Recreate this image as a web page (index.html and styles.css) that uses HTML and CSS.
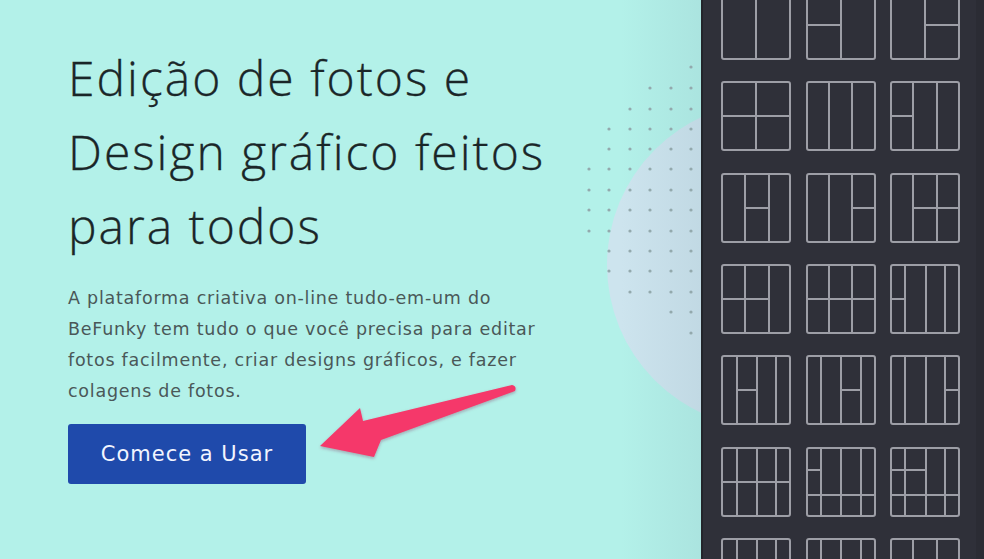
FILE: index.html
```html
<!DOCTYPE html>
<html lang="pt">
<head>
<meta charset="utf-8">
<title>BeFunky</title>
<link rel="stylesheet" href="styles.css">
</head>
<body>
<div class="page">
  <section class="hero">
    <div class="blob"></div>
    <div class="shade"></div>
    <svg class="dots" width="130" height="290" viewBox="0 0 130 290">
      <g fill="#93a9ad">
        <circle cx="111" cy="12" r="1.6"/>
        <circle cx="70" cy="33" r="1.6"/><circle cx="91" cy="33" r="1.6"/><circle cx="111" cy="33" r="1.6"/>
        <circle cx="50" cy="54" r="1.6"/><circle cx="70" cy="54" r="1.6"/><circle cx="91" cy="54" r="1.6"/><circle cx="111" cy="54" r="1.6"/>
        <circle cx="29" cy="74" r="1.6"/><circle cx="50" cy="74" r="1.6"/><circle cx="70" cy="74" r="1.6"/><circle cx="91" cy="74" r="1.6"/><circle cx="111" cy="74" r="1.6"/>
        <circle cx="29" cy="94" r="1.6"/><circle cx="50" cy="94" r="1.6"/><circle cx="70" cy="94" r="1.6"/><circle cx="91" cy="94" r="1.6"/><circle cx="111" cy="94" r="1.6"/>
        <circle cx="9" cy="114" r="1.6"/><circle cx="29" cy="114" r="1.6"/><circle cx="50" cy="114" r="1.6"/><circle cx="70" cy="114" r="1.6"/><circle cx="91" cy="114" r="1.6"/><circle cx="111" cy="114" r="1.6"/>
        <circle cx="9" cy="135" r="1.6"/><circle cx="29" cy="135" r="1.6"/><circle cx="50" cy="135" r="1.6"/><circle cx="70" cy="135" r="1.6"/><circle cx="91" cy="135" r="1.6"/><circle cx="111" cy="135" r="1.6"/>
        <circle cx="9" cy="155" r="1.6"/><circle cx="29" cy="155" r="1.6"/><circle cx="50" cy="155" r="1.6"/><circle cx="70" cy="155" r="1.6"/><circle cx="91" cy="155" r="1.6"/><circle cx="111" cy="155" r="1.6"/>
        <circle cx="9" cy="176" r="1.6"/><circle cx="29" cy="176" r="1.6"/><circle cx="50" cy="176" r="1.6"/><circle cx="70" cy="176" r="1.6"/><circle cx="91" cy="176" r="1.6"/><circle cx="111" cy="176" r="1.6"/>
        <circle cx="29" cy="196" r="1.6"/><circle cx="50" cy="196" r="1.6"/><circle cx="70" cy="196" r="1.6"/><circle cx="91" cy="196" r="1.6"/><circle cx="111" cy="196" r="1.6"/>
        <circle cx="29" cy="216" r="1.6"/><circle cx="50" cy="216" r="1.6"/><circle cx="70" cy="216" r="1.6"/><circle cx="91" cy="216" r="1.6"/><circle cx="111" cy="216" r="1.6"/>
        <circle cx="50" cy="237" r="1.6"/><circle cx="70" cy="237" r="1.6"/><circle cx="91" cy="237" r="1.6"/><circle cx="111" cy="237" r="1.6"/>
        <circle cx="91" cy="257" r="1.6"/><circle cx="111" cy="257" r="1.6"/>
        <circle cx="111" cy="278" r="1.6"/>
      </g>
    </svg>
    <div class="copy">
      <h1 class="title">Edição de fotos e<br>Design gráfico feitos<br>para todos</h1>
      <p class="lead">A plataforma criativa on-line tudo-em-um do<br>BeFunky tem tudo o que você precisa para editar<br>fotos facilmente, criar designs gráficos, e fazer<br>colagens de fotos.</p>
      <a class="cta" href="#">Comece a Usar</a>
    </div>
  </section>

  <aside class="panel">
    <div class="tiles">
      <svg class="tile" viewBox="0 0 70 70"><rect x="1" y="1" width="68" height="68" rx="2"/><path d="M35 1V69"/></svg>
      <svg class="tile" viewBox="0 0 70 70"><rect x="1" y="1" width="68" height="68" rx="2"/><path d="M35 1V69M1 35H35"/></svg>
      <svg class="tile" viewBox="0 0 70 70"><rect x="1" y="1" width="68" height="68" rx="2"/><path d="M35 1V69M35 35H69"/></svg>

      <svg class="tile" viewBox="0 0 70 70"><rect x="1" y="1" width="68" height="68" rx="2"/><path d="M35 1V69M1 35H69"/></svg>
      <svg class="tile" viewBox="0 0 70 70"><rect x="1" y="1" width="68" height="68" rx="2"/><path d="M23 1V69M46 1V69"/></svg>
      <svg class="tile" viewBox="0 0 70 70"><rect x="1" y="1" width="68" height="68" rx="2"/><path d="M23 1V69M47 1V69M1 35H23"/></svg>

      <svg class="tile" viewBox="0 0 70 70"><rect x="1" y="1" width="68" height="68" rx="2"/><path d="M24 1V69M48 1V69M24 35H48"/></svg>
      <svg class="tile" viewBox="0 0 70 70"><rect x="1" y="1" width="68" height="68" rx="2"/><path d="M23 1V69M46 1V69M46 35H69"/></svg>
      <svg class="tile" viewBox="0 0 70 70"><rect x="1" y="1" width="68" height="68" rx="2"/><path d="M23 1V69M47 1V69M23 35H69"/></svg>

      <svg class="tile" viewBox="0 0 70 70"><rect x="1" y="1" width="68" height="68" rx="2"/><path d="M24 1V69M48 1V69M1 35H48"/></svg>
      <svg class="tile" viewBox="0 0 70 70"><rect x="1" y="1" width="68" height="68" rx="2"/><path d="M23 1V69M46 1V69M1 35H69"/></svg>
      <svg class="tile" viewBox="0 0 70 70"><rect x="1" y="1" width="68" height="68" rx="2"/><path d="M15 1V69M36 1V69M55 1V69M1 35H15"/></svg>

      <svg class="tile" viewBox="0 0 70 70"><rect x="1" y="1" width="68" height="68" rx="2"/><path d="M16 1V69M36 1V69M55 1V69M16 35H36"/></svg>
      <svg class="tile" viewBox="0 0 70 70"><rect x="1" y="1" width="68" height="68" rx="2"/><path d="M15 1V69M35 1V69M55 1V69M35 35H55"/></svg>
      <svg class="tile" viewBox="0 0 70 70"><rect x="1" y="1" width="68" height="68" rx="2"/><path d="M15 1V69M36 1V69M55 1V69M55 35H69"/></svg>

      <svg class="tile" viewBox="0 0 70 70"><rect x="1" y="1" width="68" height="68" rx="2"/><path d="M16 1V69M36 1V69M55 1V69M1 35H69"/></svg>
      <svg class="tile" viewBox="0 0 70 70"><rect x="1" y="1" width="68" height="68" rx="2"/><path d="M15 1V69M35 1V69M55 1V69M1 23H15M1 48H69"/></svg>
      <svg class="tile" viewBox="0 0 70 70"><rect x="1" y="1" width="68" height="68" rx="2"/><path d="M15 1V69M36 1V69M55 1V69M1 23H36M1 48H69"/></svg>

      <svg class="tile" viewBox="0 0 70 70"><rect x="1" y="1" width="68" height="68" rx="2"/><path d="M16 1V69M36 1V69M55 1V69"/></svg>
      <svg class="tile" viewBox="0 0 70 70"><rect x="1" y="1" width="68" height="68" rx="2"/><path d="M15 1V69M35 1V69M55 1V69"/></svg>
      <svg class="tile" viewBox="0 0 70 70"><rect x="1" y="1" width="68" height="68" rx="2"/><path d="M23 1V69M47 1V69"/></svg>
    </div>
  </aside>

  <svg class="arrow" width="984" height="559" viewBox="0 0 984 559">
    <defs>
      <filter id="sh" x="-10%" y="-30%" width="120%" height="160%">
        <feDropShadow dx="0" dy="1.5" stdDeviation="1.5" flood-color="#7a2040" flood-opacity="0.35"/>
      </filter>
    </defs>
    <path d="M320 446 L360 408 L363 421 L512 385 Q517 386 515 391 L381 440 L374 457 Z" fill="#f5386b" filter="url(#sh)"/>
  </svg>
</div>
</body>
</html>
```

FILE: styles.css
```css
* { box-sizing: border-box; }
html, body { margin: 0; padding: 0; }
body {
  width: 984px;
  height: 559px;
  overflow: hidden;
  background: #b3f1e9;
}
.page {
  position: relative;
  display: flex;
  width: 984px;
  height: 559px;
  overflow: hidden;
}
.hero {
  position: relative;
  width: 701px;
  flex: 0 0 701px;
  height: 559px;
  background: #b3f1e9;
  overflow: hidden;
}
.blob {
  position: absolute;
  left: 607px;
  top: 102px;
  width: 326px;
  height: 326px;
  border-radius: 50%;
  background: #cde4ee;
}
.shade {
  position: absolute;
  top: 0;
  right: 0;
  width: 80px;
  height: 559px;
  background: linear-gradient(to right, rgba(120,150,165,0), rgba(120,150,165,0.14));
}
.dots {
  position: absolute;
  left: 580px;
  top: 55px;
}
.copy {
  position: relative;
  padding: 41px 0 0 68px;
}
.title {
  margin: 0;
  font-family: "Open Sans", sans-serif;
  font-weight: 300;
  font-size: 48px;
  line-height: 74px;
  color: #1a2628;
  letter-spacing: 2px;
  -webkit-text-stroke: 0.3px #1a2628;
}
.lead {
  margin: 20px 0 0 0;
  font-family: "DejaVu Sans", sans-serif;
  font-size: 17.5px;
  line-height: 31px;
  letter-spacing: 0.75px;
  color: #4a5858;
}
.cta {
  display: flex;
  align-items: center;
  justify-content: center;
  width: 238px;
  height: 60px;
  margin-top: 17px;
  background: #1f4aab;
  border-radius: 3px;
  color: #f2f5ff;
  text-decoration: none;
  font-family: "DejaVu Sans", sans-serif;
  font-size: 21px;
  letter-spacing: 1px;
}
.panel {
  flex: 0 0 283px;
  height: 559px;
  background: #2f3039;
  border-left: 2px solid #23252b;
  box-shadow: inset -8px 0 0 #2b2c34;
}
.tiles {
  display: grid;
  grid-template-columns: repeat(3, 70px);
  grid-auto-rows: 70px;
  column-gap: 14.5px;
  row-gap: 21.33px;
  margin: -10px 0 0 18px;
}
.tile {
  display: block;
  width: 70px;
  height: 70px;
}
.tile rect, .tile path {
  fill: none;
  stroke: #9d9ea6;
  stroke-width: 2;
}
.arrow {
  position: absolute;
  left: 0;
  top: 0;
  pointer-events: none;
}
```
